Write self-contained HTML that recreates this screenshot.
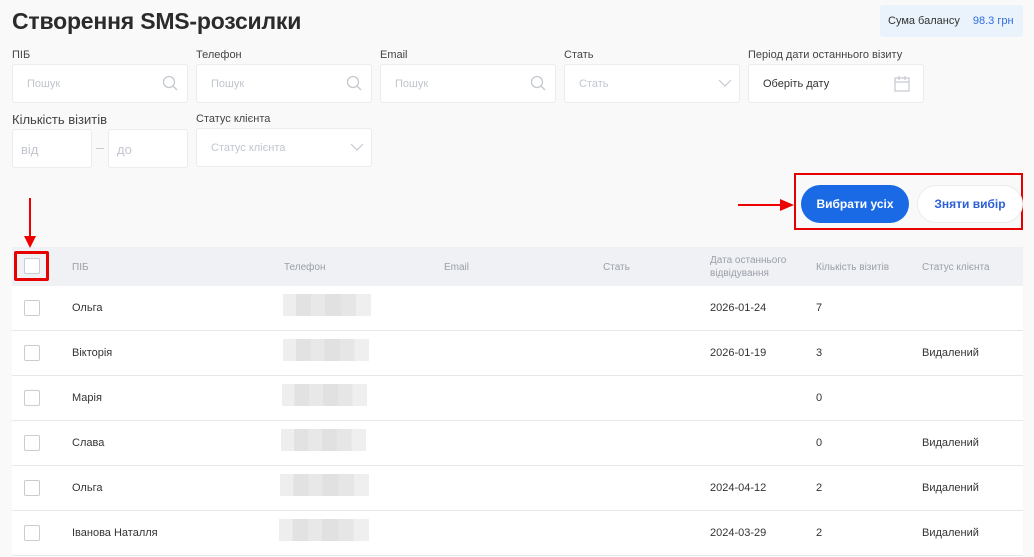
<!DOCTYPE html>
<html><head><meta charset="utf-8"><style>
*{box-sizing:border-box;margin:0;padding:0}
body{width:1034px;height:557px;overflow:hidden;background:#f9f9f9;font-family:"Liberation Sans",sans-serif;position:relative;color:#333}
.a{position:absolute}
h1{position:absolute;left:12px;top:8px;font-size:23px;font-weight:bold;color:#2b2b2b;letter-spacing:-0.2px}
.lbl{position:absolute;font-size:11px;color:#444}
.inp{position:absolute;height:39px;background:#fff;border:1px solid #ececec;border-radius:3px;font-size:11px;color:#c2c6cf;padding:0 14px;line-height:39px}
.bal{left:880px;top:5px;width:143px;height:32px;background:#eaf3fb;border-radius:3px;font-size:11px;line-height:32px;padding-left:8px;color:#333}
.tbl{left:12px;top:247px;width:1011px;height:310px;background:#fff}
.th{position:absolute;top:0;left:0;width:1011px;height:39px;background:#eff1f4}
.hc{position:absolute;font-size:10px;color:#9ba0a8}
.row{position:absolute;left:0;width:1011px;height:45px;border-bottom:1px solid #e8e8e8;font-size:11px;color:#333}
.row span{position:absolute;top:16px}
.cb{position:absolute;left:12px;width:16px;height:16px;border:1px solid #c8ccd3;border-radius:2px;background:#fff}
.blur{position:absolute;top:8px;height:22px;background:linear-gradient(90deg,#eee 0 15%,#e2e2e2 15% 32%,#e8e8e8 32% 48%,#e1e1e1 48% 66%,#e6e6e6 66% 83%,#efefef 83%)}
</style></head><body>
<h1>Створення SMS-розсилки</h1>
<div class="a bal">Сума балансу <span style="color:#2e6de0;margin-left:10px">98.3 грн</span></div>

<div class="lbl" style="left:12px;top:49px">ПІБ</div>
<div class="lbl" style="left:196px;top:49px">Телефон</div>
<div class="lbl" style="left:380px;top:49px">Email</div>
<div class="lbl" style="left:564px;top:49px">Стать</div>
<div class="lbl" style="left:748px;top:49px">Період дати останнього візиту</div>

<div class="inp" style="left:12px;top:64px;width:176px">Пошук</div>
<div class="inp" style="left:196px;top:64px;width:176px">Пошук</div>
<div class="inp" style="left:380px;top:64px;width:176px">Пошук</div>
<div class="inp" style="left:564px;top:64px;width:176px">Стать</div>
<div class="inp" style="left:748px;top:64px;width:176px;color:#333">Оберіть дату</div>
<svg class="a" style="left:162px;top:75px" width="16" height="16"><circle cx="7" cy="7" r="5.5" fill="none" stroke="#c5c9d0" stroke-width="1.3"/><path d="M11 11l4 4" stroke="#c5c9d0" stroke-width="1.3"/></svg>
<svg class="a" style="left:346px;top:75px" width="16" height="16"><circle cx="7" cy="7" r="5.5" fill="none" stroke="#c5c9d0" stroke-width="1.3"/><path d="M11 11l4 4" stroke="#c5c9d0" stroke-width="1.3"/></svg>
<svg class="a" style="left:530px;top:75px" width="16" height="16"><circle cx="7" cy="7" r="5.5" fill="none" stroke="#c5c9d0" stroke-width="1.3"/><path d="M11 11l4 4" stroke="#c5c9d0" stroke-width="1.3"/></svg>
<svg class="a" style="left:718px;top:78px" width="14" height="10"><path d="M1 2l6 6 6-6" fill="none" stroke="#c5c9d0" stroke-width="1.2"/></svg>
<svg class="a" style="left:894px;top:75px" width="16" height="17"><rect x="1" y="3" width="14" height="13" fill="none" stroke="#c5c9d0" stroke-width="1.2"/><path d="M1 7h14M5 1v4M11 1v4" stroke="#c5c9d0" stroke-width="1.2"/></svg>

<div class="lbl" style="left:12px;top:112px;font-size:13px">Кількість візитів</div>
<div class="lbl" style="left:196px;top:113px">Статус клієнта</div>
<div class="inp" style="left:12px;top:129px;width:80px;font-size:13px;padding-left:8px">від</div>
<div class="a" style="left:96px;top:148px;width:8px;height:1px;background:#ccc"></div>
<div class="inp" style="left:108px;top:129px;width:80px;font-size:13px;padding-left:8px">до</div>
<div class="inp" style="left:196px;top:128px;width:176px">Статус клієнта</div>
<svg class="a" style="left:350px;top:142px" width="14" height="10"><path d="M1 2l6 6 6-6" fill="none" stroke="#c5c9d0" stroke-width="1.2"/></svg>

<div class="a" style="left:738px;top:204px;width:48px;height:2px;background:#e00"></div>
<svg class="a" style="left:780px;top:199px" width="14" height="12"><path d="M0 0l14 6-14 6z" fill="#e00"/></svg>
<div class="a" style="left:794px;top:173px;width:229px;height:57px;border:2px solid #e60000"></div>
<div class="a" style="left:801px;top:185px;width:108px;height:38px;border-radius:19px;background:#1a6ae6;color:#fff;font-weight:bold;font-size:12px;text-align:center;line-height:38px">Вибрати усіх</div>
<div class="a" style="left:917px;top:185px;width:106px;height:38px;border-radius:19px;background:#fff;border:1px solid #ececec;color:#2a5fd6;font-weight:bold;font-size:12px;text-align:center;line-height:36px">Зняти вибір</div>

<div class="a tbl">
<div class="th">
<div class="cb" style="top:11px"></div>
<div class="hc" style="left:60px;top:15px">ПІБ</div>
<div class="hc" style="left:272px;top:15px">Телефон</div>
<div class="hc" style="left:432px;top:15px">Email</div>
<div class="hc" style="left:591px;top:15px">Стать</div>
<div class="hc" style="left:698px;top:7px;line-height:13px">Дата останнього<br>відвідування</div>
<div class="hc" style="left:804px;top:15px">Кількість візитів</div>
<div class="hc" style="left:910px;top:15px">Статус клієнта</div>
</div>
<div class="row" style="top:39px"><div class="cb" style="top:14px"></div><span style="left:60px">Ольга</span><div class="blur" style="left:271px;width:88px"></div><span style="left:698px">2026-01-24</span><span style="left:804px">7</span></div>
<div class="row" style="top:84px"><div class="cb" style="top:14px"></div><span style="left:60px">Вікторія</span><div class="blur" style="left:271px;width:86px"></div><span style="left:698px">2026-01-19</span><span style="left:804px">3</span><span style="left:910px">Видалений</span></div>
<div class="row" style="top:129px"><div class="cb" style="top:14px"></div><span style="left:60px">Марія</span><div class="blur" style="left:270px;width:85px"></div><span style="left:804px">0</span></div>
<div class="row" style="top:174px"><div class="cb" style="top:14px"></div><span style="left:60px">Слава</span><div class="blur" style="left:269px;width:85px"></div><span style="left:804px">0</span><span style="left:910px">Видалений</span></div>
<div class="row" style="top:219px"><div class="cb" style="top:14px"></div><span style="left:60px">Ольга</span><div class="blur" style="left:268px;width:89px"></div><span style="left:698px">2024-04-12</span><span style="left:804px">2</span><span style="left:910px">Видалений</span></div>
<div class="row" style="top:264px"><div class="cb" style="top:14px"></div><span style="left:60px">Іванова Наталля</span><div class="blur" style="left:267px;width:90px"></div><span style="left:698px">2024-03-29</span><span style="left:804px">2</span><span style="left:910px">Видалений</span></div>
</div>

<div class="a" style="left:14px;top:251px;width:35px;height:30px;border:3px solid #e60000;border-radius:2px"></div>
<div class="a" style="left:29px;top:198px;width:2px;height:42px;background:#e00"></div>
<svg class="a" style="left:24px;top:236px" width="12" height="12"><path d="M0 0h12l-6 12z" fill="#e00"/></svg>
</body></html>
